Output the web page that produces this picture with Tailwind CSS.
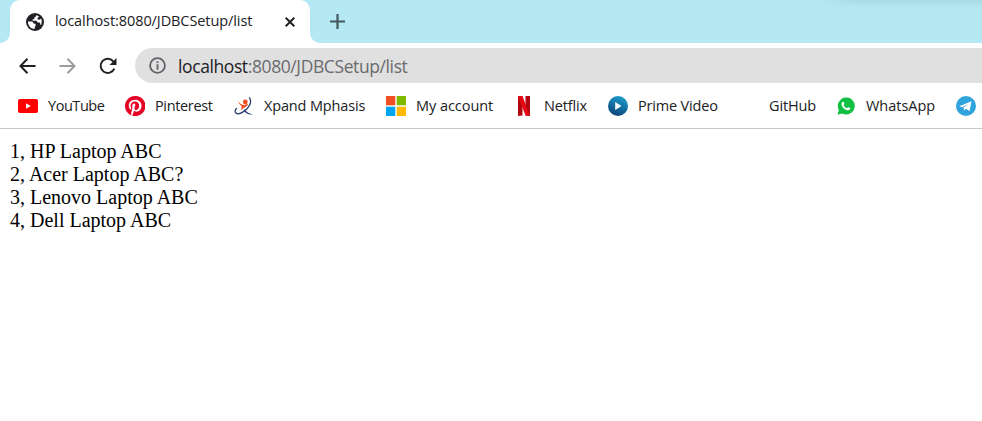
<!DOCTYPE html>
<html lang="en">
<head>
<meta charset="utf-8">
<title>localhost:8080/JDBCSetup/list</title>
<script src="https://cdn.jsdelivr.net/npm/@tailwindcss/browser@4"></script>
</head>
<body class="bg-white w-[982px] h-[421px] overflow-hidden font-['Open_Sans','Noto_Sans',sans-serif] text-[#202124]">
<!-- Tab strip -->
<header class="relative h-[43px] bg-[#b4e8f2] flex items-start">
  <div class="absolute right-0 top-0 w-[160px] h-[8px] bg-linear-to-b from-[#a9dae5] to-[#b4e8f2] mask-l-from-80%"></div>
  <svg class="w-[10px] h-[10px] self-end shrink-0" viewBox="0 0 10 10"><path d="M10 0A10 10 0 0 1 0 10H10Z" fill="#fff"/></svg>
  <div class="w-[300px] h-[43px] bg-white rounded-t-[10px] flex items-center pl-4 shrink-0">
    <svg class="w-[18px] h-[18px] shrink-0" viewBox="0 0 18 18"><circle cx="9" cy="9" r="9" fill="#202124"/><path d="M2 8.400H5.700Q7.500 8.600 7.500 10.400L9.400 10.800Q10.200 12 9.200 13.200L8.400 15.900Q3 15.500 2 10ZM10.200 2.200Q10 4 8.400 4.500L8.300 6 6.500 6.400 6.700 7.700H10.600L11.500 9.600H13.400Q14.600 10 14.300 11.800L15.300 11.700Q16.700 8.500 15.200 5.600L13.600 6.800 11.400 6.300 11.700 4.700 13.200 3.600Q12 2.400 10.200 2.200Z" fill="#fff"/></svg>
    <span class="ml-[11px] mb-px w-[200px] text-[14.5px] leading-[20px] tracking-[-0.08px] whitespace-nowrap">localhost:8080/JDBCSetup/list</span>
    <svg class="ml-[30px] w-[10px] h-[10px] shrink-0" viewBox="0 0 10 10"><path d="M.7.7 9.3 9.3M9.3.7.7 9.3" stroke="#202124" stroke-width="2"/></svg>
  </div>
  <svg class="w-[10px] h-[10px] self-end shrink-0" viewBox="0 0 10 10"><path d="M0 0A10 10 0 0 0 10 10H0Z" fill="#fff"/></svg>
  <svg class="ml-[10px] mt-[14px] w-[15px] h-[15px]" viewBox="0 0 15 15"><path d="M7.5 0V15M0 7.5H15" stroke="#42575b" stroke-width="2.2"/></svg>
</header>
<!-- Navigation -->
<nav class="h-[45px] flex items-center pl-[19px]">
  <svg class="w-[17px] h-[16px] shrink-0" viewBox="0 0 17 16"><path d="M16.5 8H2M8.5.8 1.5 8l7 7.2" fill="none" stroke="#202124" stroke-width="2"/></svg>
  <svg class="ml-[23px] w-[17px] h-[16px] shrink-0" viewBox="0 0 17 16"><path d="M.5 8H15M8.5.8l7 7.2-7 7.2" fill="none" stroke="#9b9c9e" stroke-width="2"/></svg>
  <svg class="ml-[23px] w-[18px] h-[18px] shrink-0" viewBox="0 0 18 18"><path d="M15.3 11.6A7.1 7.1 0 1 1 14.5 4.6" fill="none" stroke="#202124" stroke-width="2"/><path d="M17.5 1V8H10.5Z" fill="#202124"/></svg>
  <div class="ml-[18px] h-[35px] flex-1 rounded-l-full bg-[#e0e0e0] flex items-center pl-[14px]">
    <svg class="w-[17px] h-[17px] shrink-0" viewBox="0 0 17 17"><circle cx="8.5" cy="8.5" r="7.4" fill="none" stroke="#5f6368" stroke-width="1.8"/><path d="M8.5 4.2V6M8.5 7.3V12.7" stroke="#5f6368" stroke-width="1.8"/></svg>
    <span class="ml-3 text-[17.5px] leading-[24px] tracking-[-0.4px] whitespace-nowrap">localhost<span class="text-[#6a6b6d]">:8080/JDBCSetup/list</span></span>
  </div>
</nav>
<!-- Bookmarks -->
<div class="h-[41px] border-b border-[#c8c8c8] pl-[18px] pb-[5px] flex items-center gap-[20px] text-[14.5px] leading-[20px] whitespace-nowrap overflow-hidden">
  <div class="flex items-center gap-[10px] w-[87px] shrink-0"><svg class="w-5 h-5 shrink-0" viewBox="0 0 20 20"><rect y="3" width="20" height="14" rx="2" fill="#f00"/><path d="M8 7.300v5.400l4.800-2.700z" fill="#fff"/></svg><span class="tracking-[-0.45px]">YouTube</span></div>
  <div class="flex items-center gap-[10px] w-[89px] shrink-0"><svg class="w-5 h-5 shrink-0" viewBox="0 0 24 24"><circle cx="12" cy="12" r="12" fill="#fff"/><path d="M12 0C5.4 0 0 5.4 0 12c0 5.1 3.2 9.4 7.6 11.2-.1-.9-.2-2.4 0-3.5l1.4-6s-.3-.7-.3-1.8c0-1.700 1-2.900 2.200-2.900 1 0 1.500.8 1.500 1.700 0 1-.7 2.600-1 4-.3 1.200.6 2.200 1.800 2.200 2.100 0 3.800-2.200 3.800-5.500 0-2.900-2.100-4.900-5-4.900-3.400 0-5.400 2.600-5.400 5.200 0 1 .4 2.100.9 2.700.1.1.1.2.1.3l-.3 1.400c-.1.200-.2.300-.4.200-1.500-.7-2.400-2.900-2.400-4.600 0-3.800 2.800-7.300 7.900-7.300 4.200 0 7.400 3 7.400 6.900 0 4.100-2.600 7.500-6.200 7.500-1.200 0-2.400-.6-2.700-1.400l-.8 2.800c-.3 1-1 2.300-1.500 3.100A12 12 0 1 0 12 0z" fill="#e60023"/></svg><span class="tracking-[-0.35px]">Pinterest</span></div>
  <div class="flex items-center gap-[10px] w-[132px] shrink-0"><svg class="w-5 h-5 shrink-0" viewBox="0 0 20 20"><path d="M15.200 1.300C18.500 6 15.500 11.500 9.500 15.600 5.500 18.400 2 18.500 1.300 16 1 14.500 1.800 13 3 12.300" fill="none" stroke="#2b3f75" stroke-width="1.300"/><path d="M10.500 13.200Q13 17 18.500 18.300 13.500 19.500 9.500 14.500Z" fill="#273c75"/><circle cx="11.300" cy="6" r="2.400" fill="#f04e23"/><path d="M4 5.200Q6.500 8.800 10.500 8.900L14.300 7.800Q13.500 10.500 10.500 11.500L6.500 14.500Q8.300 11.500 7.300 9.800 4.800 8.300 4 5.200Z" fill="#f04e23"/></svg><span class="tracking-[-0.15px]">Xpand Mphasis</span></div>
  <div class="flex items-center gap-[10px] w-[108px] shrink-0"><svg class="w-5 h-5 shrink-0" viewBox="0 0 20 20"><path d="M0 0h9.300v9.300H0z" fill="#f25022"/><path d="M10.700 0H20v9.300h-9.300z" fill="#7fba00"/><path d="M0 10.700h9.300V20H0z" fill="#00a4ef"/><path d="M10.700 10.700H20V20h-9.300z" fill="#ffb900"/></svg><span class="tracking-[-0.05px]">My account</span></div>
  <div class="flex items-center gap-[10px] w-[74px] shrink-0"><svg class="w-5 h-5 shrink-0" viewBox="0 0 20 20"><path d="M4 0h4.500v19.500L4 20zM11.500 0H16v20l-4.500-.5z" fill="#b1060f"/><path d="M4 0h4.500L16 20l-4.500-.5z" fill="#e50914"/></svg><span class="tracking-[-0.15px]">Netflix</span></div>
  <div class="flex items-center gap-[10px] w-[111px] shrink-0"><svg class="w-5 h-5 shrink-0" viewBox="0 0 20 20"><defs><linearGradient id="pv" x1=".7" y1="0" x2=".3" y2="1"><stop stop-color="#1c9fcb"/><stop offset="1" stop-color="#0d4178"/></linearGradient></defs><circle cx="10" cy="10" r="10" fill="url(#pv)"/><path d="M7.500 6.500v7L13 10z" fill="#fff" stroke="#fff" stroke-linejoin="round" stroke-width=".6"/></svg><span class="tracking-[-0.17px]">Prime Video</span></div>
  <div class="flex items-center gap-[10px] w-[77px] shrink-0"><span class="w-5 h-5 shrink-0"></span><span class="tracking-[-0.15px]">GitHub</span></div>
  <div class="flex items-center gap-[10px] w-[100px] shrink-0"><svg class="w-5 h-5 shrink-0" viewBox="0 0 20 20"><path d="M1.500 18.700 2.800 14A8.500 8.500 0 1 1 6.200 17.400Z" fill="#12c143"/><path d="M7.300 5.600Q5.200 6 5.500 8.400 6.600 12.700 11.300 14.300 14 14.600 14.500 12.300L12.100 11 10.900 12.200Q8.500 11.200 7.500 9L8.500 7.900Z" fill="#fff"/></svg><span class="tracking-[-0.02px]">WhatsApp</span></div>
  <svg class="w-5 h-5 shrink-0" viewBox="0 0 20 20"><circle cx="10" cy="10" r="10" fill="#2fa3dc"/><path d="M3.200 10.300 15.500 5.200 13.500 15.300 10 12.700 8.200 14.500 7.500 11.500 12.500 7.800 6.300 11.300Z" fill="#fff"/></svg>
</div>
<!-- Page content -->
<main class="pt-[11px] pl-[10px] font-['Liberation_Serif',serif] text-[20px] leading-[23px] text-black">
  <p>1, HP Laptop ABC</p>
  <p>2, Acer Laptop ABC?</p>
  <p>3, Lenovo Laptop ABC</p>
  <p>4, Dell Laptop ABC</p>
</main>
</body>
</html>
